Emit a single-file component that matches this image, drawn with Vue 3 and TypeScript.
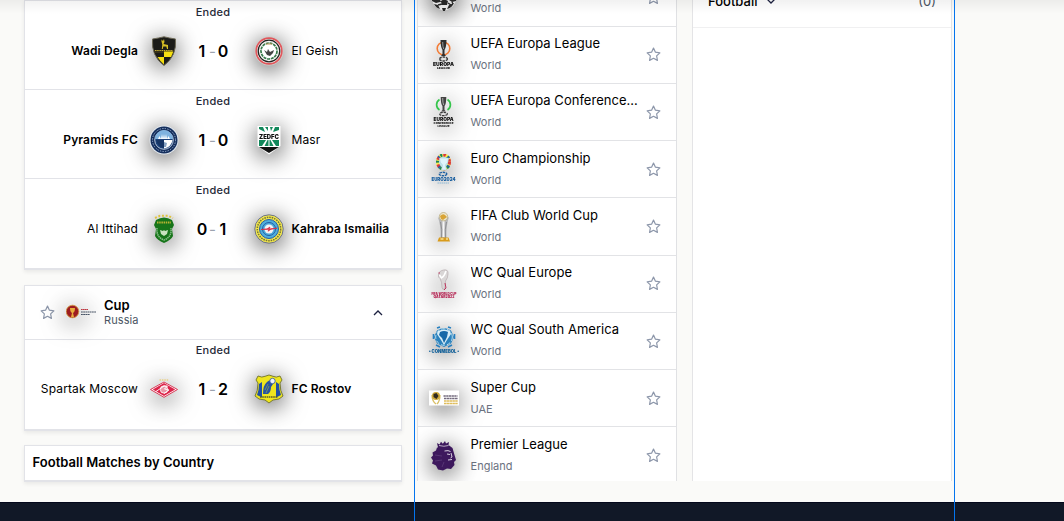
<script setup lang="ts">
interface Side {
  name: string
  logo: string
  won?: boolean
}
interface Match {
  home: Side
  away: Side
  score: [number, number]
}
interface League {
  name: string
  region: string
  logo: string
}

const earlier: Match[] = [
  { home: { name: 'Wadi Degla', logo: 'degla', won: true }, away: { name: 'El Geish', logo: 'geish' }, score: [1, 0] },
  { home: { name: 'Pyramids FC', logo: 'pyramids', won: true }, away: { name: 'Masr', logo: 'zed' }, score: [1, 0] },
  { home: { name: 'Al Ittihad', logo: 'ittihad' }, away: { name: 'Kahraba Ismailia', logo: 'kahraba', won: true }, score: [0, 1] },
]
const cup: Match[] = [
  { home: { name: 'Spartak Moscow', logo: 'spartak' }, away: { name: 'FC Rostov', logo: 'rostov', won: true }, score: [1, 2] },
]
const groups = [
  { key: 'earlier', matches: earlier, header: false },
  { key: 'cup', matches: cup, header: true },
]
const leagues: League[] = [
  { name: 'UEFA Champions League', region: 'World', logo: 'champions' },
  { name: 'UEFA Europa League', region: 'World', logo: 'europa' },
  { name: 'UEFA Europa Conference League', region: 'World', logo: 'conference' },
  { name: 'Euro Championship', region: 'World', logo: 'euro' },
  { name: 'FIFA Club World Cup', region: 'World', logo: 'clubcup' },
  { name: 'WC Qual Europe', region: 'World', logo: 'wc' },
  { name: 'WC Qual South America', region: 'World', logo: 'conmebol' },
  { name: 'Super Cup', region: 'UAE', logo: 'uae' },
  { name: 'Premier League', region: 'England', logo: 'premier' },
]
</script>

<template>
  <div class="screen">
    <svg class="defs" aria-hidden="true">
      <symbol id="star" viewBox="0 0 24 24">
        <path d="M12 1.8l3.1 6.5 7.1 1-5.2 5 1.3 7.1L12 18l-6.3 3.4L7 14.300l-5.200-5 7.100-1z" fill="none" stroke="currentColor" stroke-width="1.9" stroke-linejoin="round" />
      </symbol>
      <symbol id="degla" viewBox="0 0 30 30">
        <path d="M3.500 3Q10 2 15 .8 20 2 26.500 3 28 20 15 29.500 2 20 3.500 3z" fill="#1b1b18" stroke="#6d6957" />
        <path d="M5 14h20l-.8 3H5.500z" fill="#373218" />
        <path d="M15 15.500h9.200q-.8 3-2.200 5.500h-7zM8.500 21H15v7.500Q11 25 8.500 21z" fill="#f5df12" />
        <path d="M12.500 3.500l1.500 1.500 1-2 .5 3-1 2 4.500 1v4h-1l-.7-2.500h-3l-.5 2.500h-1l.5-4.500-.8-3z" fill="#d5bd25" />
        <path d="M6 14.500h18" stroke="#c4ad34" stroke-dasharray="1.500 .7" />
      </symbol>
      <symbol id="geish" viewBox="0 0 30 30">
        <circle cx="15" cy="15" r="14.500" fill="#cfcbc9" />
        <circle cx="15" cy="15" r="12.800" fill="#fff" stroke="#e0575c" stroke-width="1.700" />
        <circle cx="15" cy="15" r="10.800" fill="#f6f6f4" stroke="#22221f" stroke-width="1.300" />
        <circle cx="15" cy="15" r="8" fill="#fff" stroke="#36794a" stroke-width="1.700" stroke-dasharray="3 .8" />
        <path d="M10 14l3 2 1-3 2 3 4-2-1 3-3 3-3-1z" fill="#444" />
        <path d="M12 8h6" stroke="#c49455" />
      </symbol>
      <symbol id="pyramids" viewBox="0 0 30 30">
        <circle cx="15" cy="15" r="14.500" fill="#e1e8ef" />
        <circle cx="15" cy="15" r="13.500" fill="#152f5d" />
        <circle cx="15" cy="15" r="11.500" fill="none" stroke="#9aafd0" stroke-width="1" stroke-dasharray="1.300 1.300" />
        <circle cx="15" cy="15" r="9.300" fill="#1d437b" stroke="#dfeaf5" stroke-width=".8" />
        <path d="M6 14a9 9 0 0 1 18 0z" fill="#7eb2df" />
        <path d="M9 14l1.500-3 1.500 3 1-5 1 5 1-5 1 5 1-5 1 5 1.500-3 1.500 3z" fill="#fff" />
        <path d="M15 15h8.500q-1 7-8.500 8.500z" fill="#fff" />
        <path d="M7 15h8v8Q9 22 7 15z" fill="#163565" />
        <path d="M15 17l3 1-1 4h-2z" fill="#87a3c3" />
      </symbol>
      <symbol id="zed" viewBox="0 0 30 30">
        <path d="M3.500 1h23v20L15 29.500 3.500 21z" fill="#fff" />
        <path d="M5 2h4l2 5-6-3zM11 2h3v4zM16 2h3l-2 4zM21 2h4v3l-6 2z" fill="#12875a" />
        <text x="15" y="13.500" text-anchor="middle" font-family="Inter, sans-serif" font-size="6.500" font-weight="900" fill="#111" textLength="20" lengthAdjust="spacingAndGlyphs">ZEDFC</text>
        <path d="M5 15h7l-4 6H5zM13.500 15h3l3 6h-9zM18 15h7v6h-3z" fill="#12875a" />
        <path d="M15 15v6" stroke="#fff" />
        <path d="M5 22h20L15 28z" fill="#111" />
      </symbol>
      <symbol id="ittihad" viewBox="0 0 30 30">
        <path d="M6 4l5-2.200h8L24 4" fill="none" stroke="#dfc33f" stroke-width="2" stroke-dasharray="2 1.700" />
        <path d="M7 6q8-5 16 0l2 5-2 4 1 7q-2 4-9 7-7-3-9-7l1-7-2-4z" fill="#17751a" />
        <path d="M8 8.500h14" stroke="#b7b333" stroke-width="2" stroke-dasharray="1.500 .7" />
        <path d="M8 14q-1 9 7 12 8-3 7-12" fill="none" stroke="#8bc18c" stroke-width="1.500" stroke-dasharray="1.500 .6" />
        <path d="M11 16l3 1 1-1 1 1 3-1-1 4-3 2-3-2z" fill="#c8e3bf" />
      </symbol>
      <symbol id="kahraba" viewBox="0 0 30 30">
        <circle cx="15" cy="15" r="14.200" fill="#f4e94d" stroke="#5d668b" stroke-width=".9" />
        <circle cx="15" cy="15" r="11.700" fill="none" stroke="#777536" stroke-width="1.500" stroke-dasharray="1.600 .9" />
        <circle cx="15" cy="15" r="9.500" fill="#4eaedb" stroke="#285da6" />
        <circle cx="15" cy="15" r="6.500" fill="none" stroke="#245da5" />
        <circle cx="15" cy="15" r="4.500" fill="#f4f2f5" />
        <path d="M7 15.500l6-.5 3-2-1 2 8-.8-6 1-3 2 1-2z" fill="#d62e48" stroke="#d62e48" stroke-width=".8" />
      </symbol>
      <symbol id="spartak" viewBox="0 0 30 30">
        <path d="M10.500 6h9" stroke="#ebc659" stroke-width="1.200" stroke-dasharray="1.500 .9" />
        <path d="M1.500 15.500L15 8l13.500 7.500L15 23.300z" fill="#fff" stroke="#d83a56" stroke-width="1" />
        <path d="M3.800 15.500L15 9.100l11.200 6.400L15 22z" fill="#dc244a" />
        <circle cx="15" cy="15.500" r="3.700" fill="#e997a7" stroke="#fff" stroke-width=".8" />
        <path d="M7 17.500l8-5.500 3.500 0-3 3 4.500 1-5 3.500" fill="none" stroke="#fff" stroke-width=".9" />
      </symbol>
      <symbol id="rostov" viewBox="0 0 30 30">
        <path d="M4 2q4 2 7 .3L15 1l4 1.300q3 1.700 7-.3l2 4-2 3q0 8 3 13l-4 3-6 1-4 3-4-3-6-1-4-3q3-5 3-13L2 6z" fill="#eee51e" stroke="#6e722b" stroke-width=".9" />
        <path d="M5 10q0 6-2 11l5 2.500V8zM25 10q0 6 2 11l-5 2.500V8z" fill="#2150a5" />
        <path d="M9 20q0-9 4-12 3-3 5-1l1 3-2 3q0 5-3 7z" fill="#2753a2" />
        <path d="M11 16l3-6M12 19l3-7" stroke="#8fa94f" stroke-width=".7" />
        <circle cx="18.500" cy="7" r="2.700" fill="#eff1f6" stroke="#2a5294" stroke-width=".8" />
        <path d="M6 23h18" stroke="#555b30" stroke-width="1.500" stroke-dasharray="1.600 .6" />
      </symbol>
      <symbol id="russia" viewBox="0 0 30 30">
        <circle cx="6.500" cy="13.500" r="6.300" fill="#9d1c20" stroke="#d29a3f" stroke-width=".8" />
        <path d="M4 10h5q0 4-2 5l1 4H5l1-4q-2-1-2-5z" fill="#e8ad3c" />
        <path d="M15 11.500h7" stroke="#bd3942" stroke-width="1.200" stroke-dasharray="1.700 .3" />
        <path d="M15 14h15M15 16.500h9" stroke="#465365" stroke-width="1.200" stroke-dasharray="1.800 .4" />
      </symbol>
      <symbol id="champions" viewBox="0 0 30 30">
        <path d="M1.500 12a13.500 13.500 0 0 1 27 0Q27 25 15 28 3 25 1.500 12z" fill="#ededed" />
        <path d="M3 14l4-2 4 3v4l-4 1-4-2zM19 13l4-2 5 3-1 4-4 1-3-2zM12 18l3-2 4 2-1 4h-5zM5 21l4 1 2 4q-4-1-6-5zM20 22l5-2q-2 5-7 6zM13 25h4l-1 3h-2z" fill="#292929" />
        <path d="M11 18l2 1M9 22l4-1M19 20l3 2M23 19l1 2" stroke="#292929" stroke-width="1.300" />
      </symbol>
      <symbol id="europa" viewBox="0 0 30 30">
        <circle cx="14.500" cy="8.500" r="6.300" fill="none" stroke="#f37b35" stroke-width="1.600" />
        <path d="M11.500 0h6q0 7-2 10v4l1.500 2h-5l1.500-2v-4Q11.500 7 11.500 0z" fill="#303030" />
        <path d="M13.700 2q0 5 1 7" stroke="#999" fill="none" />
        <ellipse cx="14.500" cy="19" rx="4" ry="2" fill="none" stroke="#3a3a3a" stroke-width="1.400" stroke-dasharray="2.500 .8" />
        <text x="14.500" y="26.300" text-anchor="middle" font-family="Inter, sans-serif" font-size="5.300" font-weight="900" fill="#111" textLength="21" lengthAdjust="spacingAndGlyphs">EUROPA</text>
        <text x="14.500" y="29.400" text-anchor="middle" font-family="Inter, sans-serif" font-size="2.500" font-weight="900" fill="#222" textLength="13" lengthAdjust="spacingAndGlyphs">LEAGUE</text>
      </symbol>
      <symbol id="conference" viewBox="0 0 30 30">
        <path d="M10.500 2.500a6.200 6.200 0 0 0 0 10.500M18.500 2.500a6.200 6.200 0 0 1 0 10.500" fill="none" stroke="#35c54b" stroke-width="1.700" />
        <path d="M11.700 0h5.600q0 7-1.800 9v4l1.500 1.500h-5l1.500-1.500V9Q11.700 7 11.700 0z" fill="#444" />
        <path d="M13.700 1q0 5 1 7" stroke="#aaa" fill="none" />
        <ellipse cx="14.500" cy="17" rx="3.800" ry="1.700" fill="none" stroke="#3a3a3a" stroke-width="1.300" stroke-dasharray="2.500 .8" />
        <text x="14.500" y="23.800" text-anchor="middle" font-family="Inter, sans-serif" font-size="5" font-weight="900" fill="#111" textLength="20" lengthAdjust="spacingAndGlyphs">EUROPA</text>
        <text x="14.500" y="26.700" text-anchor="middle" font-family="Inter, sans-serif" font-size="2.300" font-weight="900" fill="#222" textLength="20" lengthAdjust="spacingAndGlyphs">CONFERENCE</text>
        <text x="14.500" y="29.500" text-anchor="middle" font-family="Inter, sans-serif" font-size="2.300" font-weight="900" fill="#222" textLength="12" lengthAdjust="spacingAndGlyphs">LEAGUE</text>
      </symbol>
      <symbol id="euro" viewBox="0 0 30 30">
        <ellipse cx="14.500" cy="8" rx="6" ry="7" fill="#bce4ed" stroke="#f8e74a" stroke-width="3" />
        <ellipse cx="14.500" cy="8" rx="6" ry="7" fill="none" stroke="#d93740" stroke-width="3" stroke-dasharray="2.500 5" />
        <ellipse cx="14.500" cy="8" rx="6" ry="7" fill="none" stroke="#198458" stroke-width="3" stroke-dasharray="2 5.500" stroke-dashoffset="3" />
        <ellipse cx="14.500" cy="8" rx="6" ry="7" fill="none" stroke="#275aa3" stroke-width="3" stroke-dasharray="1.500 9" stroke-dashoffset="7" />
        <path d="M10.500 4q0 5 3 7l-1 5h5l-1-5q3-2 3-7z" fill="#dff4fb" stroke="#a6ccdf" stroke-width=".6" />
        <ellipse cx="14" cy="20" rx="3.800" ry="1.700" fill="none" stroke="#1e61a2" stroke-width="1.400" stroke-dasharray="2.500 .7" />
        <text x="14.500" y="27" text-anchor="middle" font-family="Inter, sans-serif" font-size="5" font-weight="900" fill="#165c9e" textLength="24" lengthAdjust="spacingAndGlyphs">EURO2024</text>
        <path d="M8.500 29h12" stroke="#8db9d6" stroke-dasharray="1.500 .5" />
      </symbol>
      <symbol id="clubcup" viewBox="0 0 30 30">
        <path d="M8.800 5q3 3 5 3t6.200-3q-3 8-2.500 21h-6Q12 13 8.800 5z" fill="#b5b6b8" />
        <path d="M14.500 9v16" stroke="#f5f5f5" stroke-width="2" fill="none" />
        <path d="M11.500 10q2 7 1 16M17.500 10q-2 7-1 16" stroke="#858588" stroke-width=".8" fill="none" />
        <circle cx="14.500" cy="4.700" r="4.200" fill="#eee7ce" stroke="#ad9b62" stroke-width=".6" />
        <path d="M11 4q3-3 5-1l2 2-4 3-2-1z" fill="#d8a436" />
        <path d="M10 25.500h9.500l1.500 4H8.500z" fill="#d99b1b" />
        <path d="M11.500 27h3M17 27h2" stroke="#f8df91" stroke-width="1.500" />
      </symbol>
      <symbol id="wc" viewBox="0 0 30 30">
        <path d="M9.500 6q0-4 5-5 5-1 4.500 4 0 4-2.500 7l-.5 7-2 1.500-1-2q0-6-2-9-2-1-1.500-3.500z" fill="#d9d6d6" stroke="#b6abad" stroke-width=".7" />
        <path d="M10.500 6l2 3q3-2 4.500-7" fill="none" stroke="#fff" stroke-width="1.500" />
        <path d="M9.500 4h1.500M16 14l1 5-2 2" stroke="#bd355e" fill="none" />
        <text x="15" y="25.800" text-anchor="middle" font-family="Inter, sans-serif" font-size="2.900" font-weight="900" fill="#b31d4d" textLength="25" lengthAdjust="spacingAndGlyphs">FIFA WORLD CUP</text>
        <text x="15" y="29.300" text-anchor="middle" font-family="Inter, sans-serif" font-size="2.900" font-weight="900" fill="#b31d4d" textLength="21" lengthAdjust="spacingAndGlyphs">QATAR2022</text>
      </symbol>
      <symbol id="conmebol" viewBox="0 0 30 30">
        <path d="M8 4.500q7-5 14 0l3 6.500-3 6.500-7 3.500-7-3.500-3-6.500z" fill="#2c82bd" />
        <path d="M8 2l3-1M19 1l3 1M4.500 8v5M25.500 8v5M7 19l4 2M19 21l4-2" stroke="#267fc0" stroke-width="1.600" />
        <circle cx="15" cy="11" r="8.300" fill="none" stroke="#b6ddef" stroke-width="1" stroke-dasharray="4 2" />
        <path d="M9 5q6-3 12 0l1 3-4 6-3 5-3-5-4-6z" fill="#d7edf7" />
        <path d="M11 6q4-2 8 0l-1 5-3 6-2-5-3-3z" fill="#1769a8" />
        <text x="15" y="27" text-anchor="middle" font-family="Inter, sans-serif" font-size="5" font-weight="900" fill="#126099" textLength="25" lengthAdjust="spacingAndGlyphs">CONMEBOL</text>
        <circle cx=".8" cy="25.300" r=".8" fill="#126099" /><circle cx="29.200" cy="25.300" r=".8" fill="#126099" />
      </symbol>
      <symbol id="uae" viewBox="0 0 30 30">
        <path d="M0 7.500h30v15H0z" fill="#fff" />
        <path d="M3 12q0 6 4 9M11 12q0 6-3 9" stroke="#d9bf66" stroke-width="1.300" fill="none" />
        <circle cx="7" cy="13" r="4" fill="#cda63a" />
        <path d="M4.500 11l3-1 2 3-2 3-3-2z" fill="#302a20" />
        <path d="M14.500 13h14M15 15.500h14" stroke="#746b7e" stroke-width="1.700" stroke-dasharray="2.300 .4" />
        <path d="M15 18h14M15 20.500h14" stroke="#dfbd5c" stroke-width="1.400" stroke-dasharray="2.500 .3" />
      </symbol>
      <symbol id="premier" viewBox="0 0 30 30">
        <path d="M8 2l2.500 1.500L12 .8l1.800 2L16 0l1 2.500L20 1l-.5 3 4 3 2 7 1.500 5-2 2 .500 3-3.500 4-4-.5-4 2-5-1-2-4-4-2 1-3-2-3 2-2-.5-3 3.500-2 1-3h1z" fill="#3d185d" />
        <path d="M10 4.500q5 1.500 9.500 0" stroke="#d9d0df" stroke-width=".8" fill="none" />
        <path d="M15.500 10q4-1 6 .5M18 13l3 .5M22 12l1 4-1.500 1M19 19l4-.5" fill="none" stroke="#d7cfdd" stroke-width="1" />
        <path d="M6 14l7 1M6 20l7-1M13 26l2-5" fill="none" stroke="#563574" stroke-width="1" />
      </symbol>
    </svg>

    <main class="page">
      <div class="columns">
        <section class="results">
          <article v-for="g in groups" :key="g.key" class="card" :class="g.key">
            <header v-if="g.header" class="cup-head">
              <svg class="star"><use href="#star" /></svg>
              <svg class="logo"><use href="#russia" /></svg>
              <div class="cup-text">
                <div class="cup-name">Cup</div>
                <div class="cup-land">Russia</div>
              </div>
              <svg class="chevron" viewBox="0 0 10 10"><path d="M1 7l4-4 4 4" /></svg>
            </header>
            <div v-for="m in g.matches" :key="m.home.name" class="match">
              <div class="status">Ended</div>
              <div class="teams">
                <span class="team home" :class="{ won: m.home.won }">{{ m.home.name }}</span>
                <svg class="logo home-logo"><use :href="'#' + m.home.logo" /></svg>
                <span class="score"><b>{{ m.score[0] }}</b><i>-</i><b>{{ m.score[1] }}</b></span>
                <svg class="logo"><use :href="'#' + m.away.logo" /></svg>
                <span class="team" :class="{ won: m.away.won }">{{ m.away.name }}</span>
              </div>
            </div>
          </article>
          <article class="card country">Football Matches by Country</article>
        </section>

        <section class="leagues">
          <div v-for="l in leagues" :key="l.name" class="league">
            <svg class="logo"><use :href="'#' + l.logo" /></svg>
            <div class="league-text">
              <div class="league-name">{{ l.name }}</div>
              <div class="league-region">{{ l.region }}</div>
            </div>
            <svg class="star"><use href="#star" /></svg>
          </div>
        </section>

        <section class="slip">
          <div class="slip-head">
            <span>Football</span>
            <svg class="chevron" viewBox="0 0 10 10"><path d="M1 3l4 4 4-4" /></svg>
            <span class="count">(0)</span>
          </div>
        </section>
      </div>
    </main>
    <footer class="footer"></footer>
    <div class="topshade"></div>
    <div class="guides"></div>
  </div>
</template>

<style>
body {
  overflow: hidden;
}
</style>

<style scoped>
.screen {
  position: relative;
  width: 1064px;
  height: 521px;
  overflow: hidden;
  background: #fafaf8;
  color: #000;
  font-family: Inter, sans-serif;
  font-size: 13px;
}
.screen * {
  box-sizing: border-box;
}
.defs {
  position: absolute;
  width: 0;
  height: 0;
}
.page {
  height: 502px;
}
.columns {
  display: flex;
  gap: 15px;
  height: 482px;
  padding-left: 24px;
}
.results {
  width: 378px;
}
.card {
  margin-bottom: 15px;
  background: #fff;
  border: 1px solid #e2e3e8;
  border-bottom-width: 2px;
  box-shadow: 0 2px 4px rgba(0, 0, 0, 0.07);
}
.match {
  height: 89px;
  padding-top: 4px;
}
.match + .match {
  border-top: 1px solid #e2e3e8;
}
.earlier .match:first-child {
  height: 88px;
}
.earlier .match:last-child {
  height: 90px;
}
.cup {
  margin-bottom: 14px;
}
.cup .match {
  padding-top: 3px;
}
.status {
  height: 15px;
  line-height: 15px;
  font-size: 11px;
  font-weight: 500;
  text-align: center;
  letter-spacing: 0.25px;
  color: #1f2937;
}
.teams {
  display: grid;
  grid-template-columns: 113px 41px 75px 30px 1fr;
  align-items: center;
  height: 30px;
  margin-top: 16px;
}
.team {
  padding-left: 7.5px;
  white-space: nowrap;
  font-size: 12px;
  line-height: 18px;
  letter-spacing: 0.13px;
}
.home {
  padding: 0;
  text-align: right;
}
.earlier .match:first-child .team {
  padding-bottom: 1px;
}
.won {
  font-weight: 600;
}
.logo {
  display: block;
  flex: none;
  width: 30px;
  height: 30px;
  filter: drop-shadow(0 4px 12px rgba(0, 0, 0, 0.75));
}
.home-logo {
  margin-left: 11px;
}
.score {
  display: flex;
  justify-content: center;
  align-items: center;
  width: 67px;
  font-size: 16px;
}
.score b {
  width: 11px;
  text-align: center;
  font-weight: 600;
}
.score i {
  width: 10px;
  text-align: center;
  font-size: 15px;
  font-style: normal;
  color: #9ca3af;
}
.cup-head {
  display: flex;
  align-items: center;
  height: 54px;
  padding: 0 18px 0 15px;
  border-bottom: 1px solid #e2e3e8;
}
.star {
  flex: none;
  width: 15px;
  height: 15px;
  color: #8d97aa;
}
.cup-head .logo {
  margin: 0 8px 0 11px;
}
.cup-text {
  flex: 1;
  padding-bottom: 1px;
}
.cup-name {
  font-weight: 600;
  line-height: 16px;
}
.cup-land {
  font-size: 11px;
  line-height: 14px;
  letter-spacing: 0.1px;
  color: #4b5563;
}
.chevron {
  width: 10px;
  height: 10px;
  fill: none;
  stroke: #1c2140;
  stroke-width: 1.3;
}
.country {
  height: 37px;
  margin: 0;
  padding-left: 7.5px;
  line-height: 33px;
  font-weight: 600;
  letter-spacing: 0.03px;
}
.leagues {
  width: 260px;
  height: 481px;
  overflow: hidden;
  background: #fff;
  border: solid #e0e1e4;
  border-width: 0 1px;
}
.league {
  display: flex;
  align-items: center;
  height: 57.25px;
  padding: 0 15px 0 11px;
  overflow: hidden;
  border-top: 1px solid #e2e3e6;
}
.league:first-child {
  margin-top: -31.55px;
}
.league-text {
  flex: 1;
  min-width: 0;
  margin-right: 8px;
  padding: 0 0 2.5px 11.5px;
}
.league-name {
  overflow: hidden;
  text-overflow: ellipsis;
  white-space: nowrap;
  font-size: 13px;
  line-height: 20px;
  letter-spacing: 0.02px;
}
.league-region {
  margin-top: 3px;
  font-size: 11px;
  line-height: 18px;
  letter-spacing: 0.02px;
  color: #6b7280;
}
.slip {
  width: 260px;
  height: 481px;
  background: #fff;
  border: solid #e4e4e6;
  border-width: 0 1px;
}
.slip-head {
  display: flex;
  align-items: center;
  height: 54px;
  margin-top: -26px;
  padding: 0 15px;
  font-weight: 500;
  border-bottom: 1px solid #f0f0f1;
}
.slip-head .chevron {
  margin-left: 9px;
}
.count {
  margin-left: auto;
  font-weight: 400;
  color: #4b5563;
}
.footer {
  height: 19px;
  background: #111827;
  border-top: 1px solid #03071b;
}
.topshade {
  position: absolute;
  inset: 0 0 auto;
  height: 14px;
  background: linear-gradient(rgba(0, 0, 0, 0.055), transparent);
}
.guides {
  position: absolute;
  top: 0;
  bottom: 0;
  left: 414px;
  width: 541px;
  border: solid #0474ee;
  border-width: 0 1px;
}
</style>
